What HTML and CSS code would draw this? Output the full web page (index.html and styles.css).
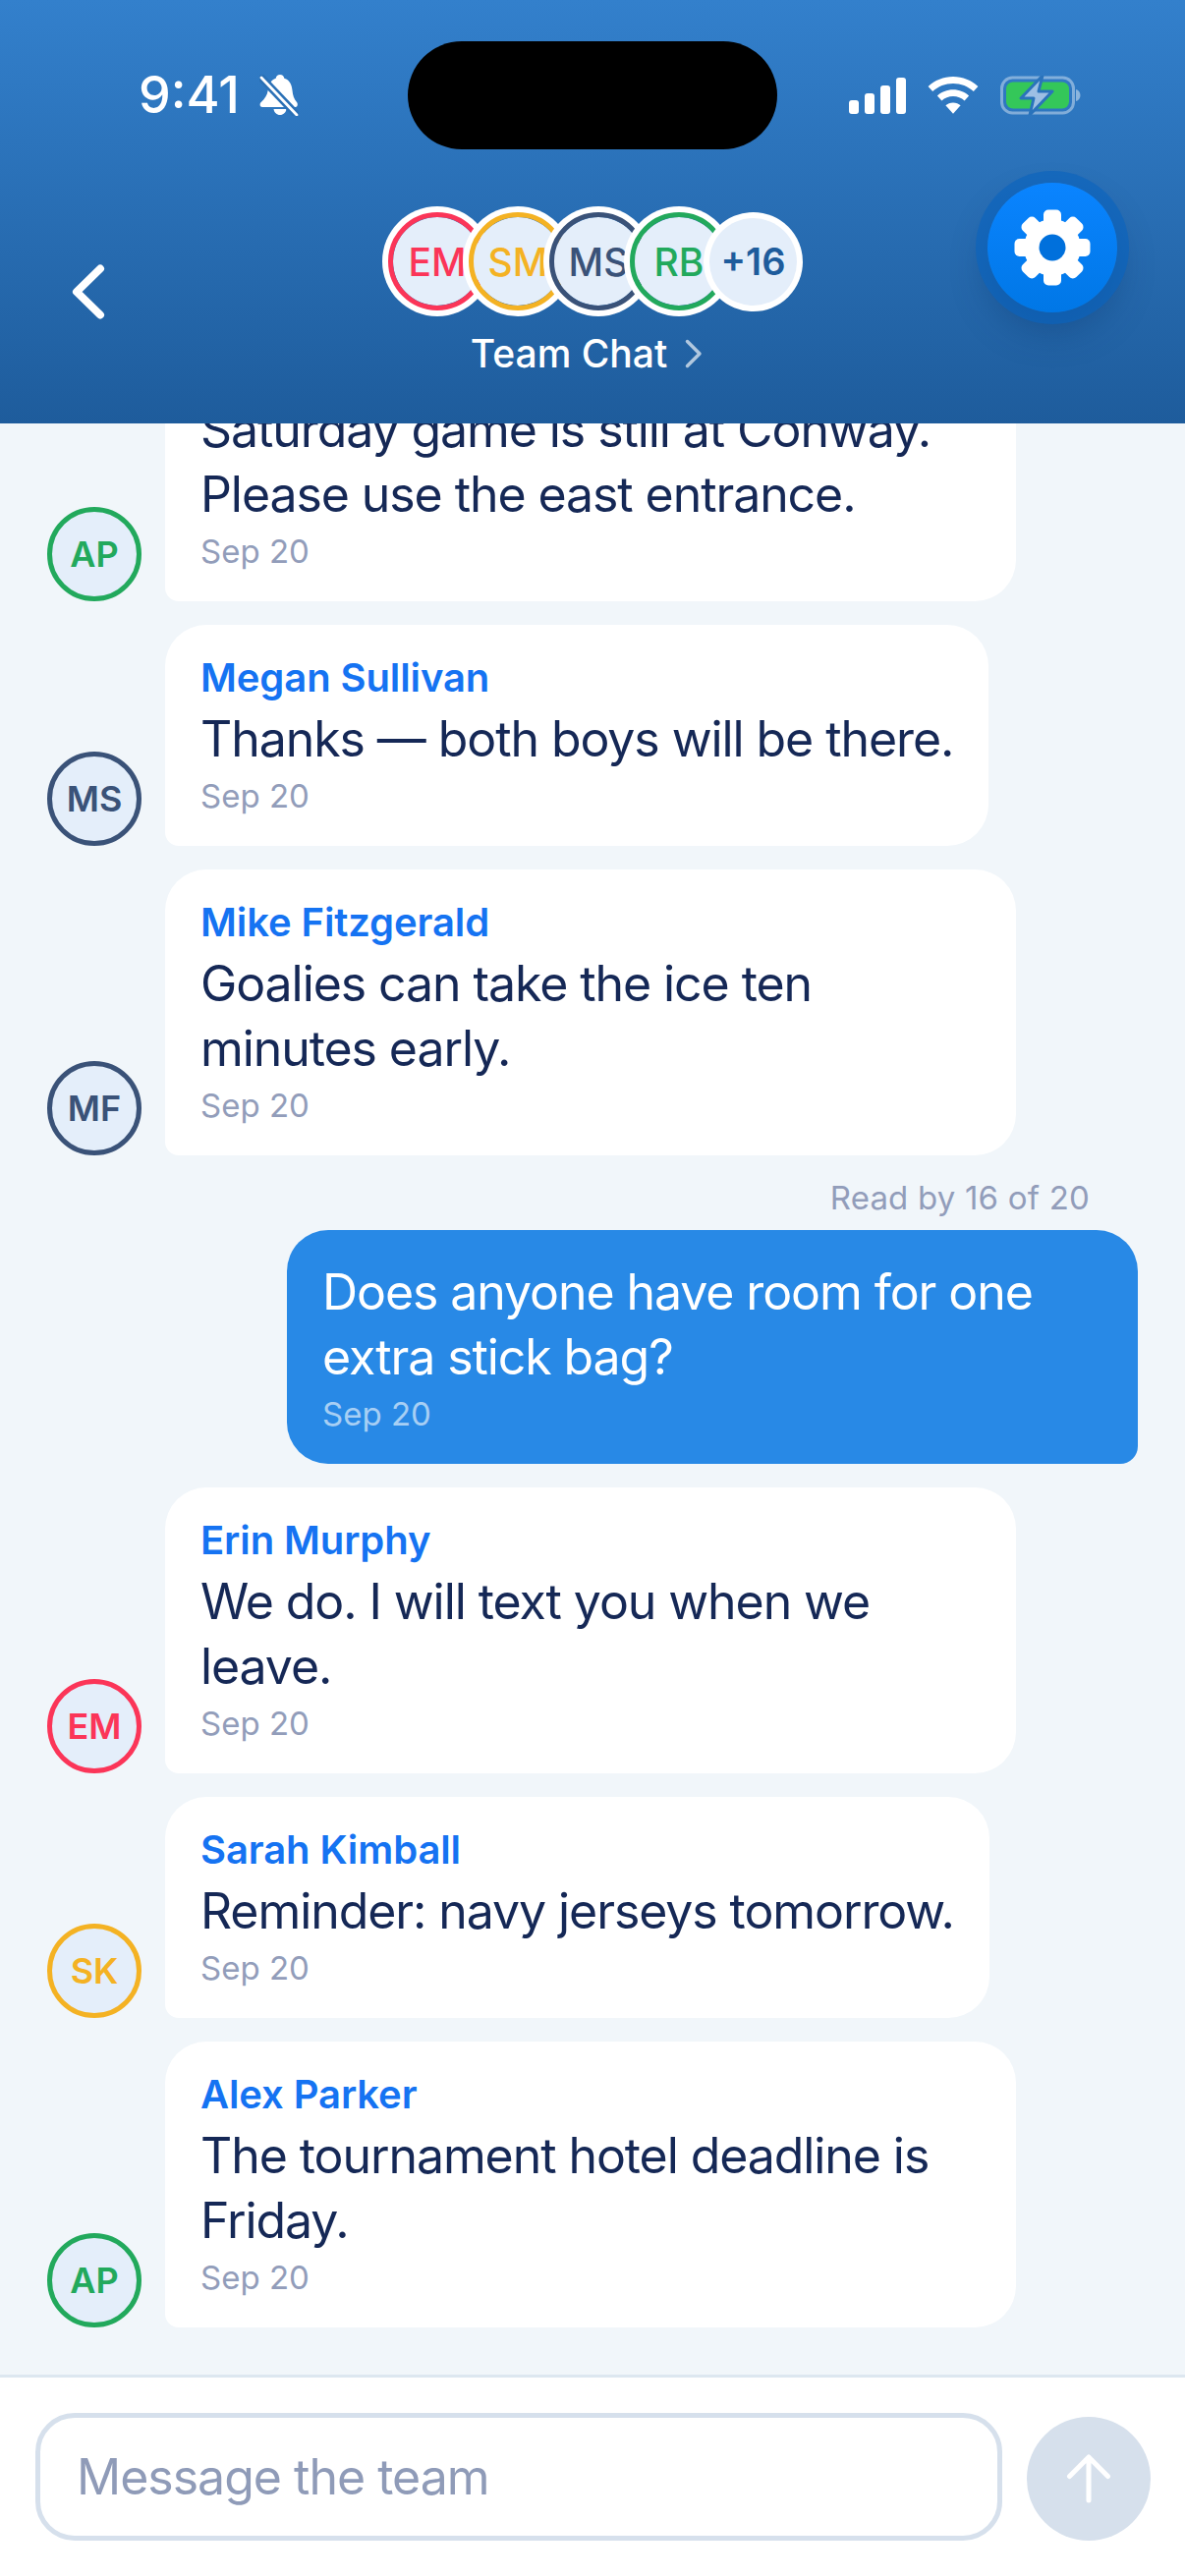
FILE: index.html
```html
<!DOCTYPE html>
<html lang="en">
<head>
    <meta charset="UTF-8">
    <meta name="viewport" content="width=device-width, initial-scale=1.0">
    <title>Team Chat</title>
    <link rel="stylesheet" href="styles.css">
</head>
<body>
    <div class="screen">
        <header class="header">
            <div class="island"></div>
            <div class="status-bar">
                <div class="status-left">
                    <span class="time">9:41</span>
                    <svg class="bell" width="40" height="42" viewBox="0 0 40 42">
                        <path d="M21 0c2.500 0 4 1.600 4.300 3.700C31 5.300 33 10.500 33.500 16c.4 5 1.800 9 4.500 12 1.200 1.400 1.300 5-1.500 5H3c-2.800 0-2.800-3.300-1.500-4.700C5.500 24.500 8 21 8.700 16c.7-6 3-10.700 8-12.300C17 1.600 18.500 0 21 0zM14.500 35h13c-.5 3.500-3.200 6-6.500 6s-6-2.500-6.500-6z" fill="#fff"/>
                        <path d="M0 1L40 43" stroke="#2a70b6" stroke-width="8"/>
                        <path d="M2 3L38 41" stroke="#fff" stroke-width="2.800" stroke-linecap="round"/>
                    </svg>
                </div>
                <div class="status-right">
                    <div class="signal">
                        <span class="bar bar-1"></span>
                        <span class="bar bar-2"></span>
                        <span class="bar bar-3"></span>
                        <span class="bar bar-4"></span>
                    </div>
                    <svg width="52" height="38" viewBox="0 0 52 38">
                        <path d="M26 0c9.800 0 18.700 3.800 25.400 10l-4.600 5C41.300 9.800 34 6.900 26 6.900S10.700 9.800 5.200 15L.6 10C7.300 3.800 16.200 0 26 0z" fill="#fff"/>
                        <path d="M26 13.200c6.200 0 11.800 2.300 16.100 6.200l-4.500 5C34.500 21.600 30.400 20 26 20s-8.500 1.600-11.600 4.400l-4.500-5c4.300-3.900 9.900-6.200 16.100-6.200z" fill="#fff"/>
                        <path d="M26 26.400c3 0 5.600 1.100 7.600 2.900L26 37.800l-7.600-8.500c2-1.800 4.600-2.900 7.600-2.900z" fill="#fff"/>
                    </svg>
                    <svg width="82" height="40" viewBox="0 0 82 40">
                        <rect x="1.500" y="2" width="73" height="36" rx="11" fill="none" stroke="#fff" stroke-opacity=".4" stroke-width="3"/>
                        <rect x="6" y="6.500" width="64" height="27" rx="7" fill="#34c759"/>
                        <path d="M77 14c2.800.8 4.500 3 4.500 6s-1.700 5.200-4.500 6z" fill="#fff" fill-opacity=".45"/>
                        <path d="M43 0L21 23h13l-4 17 23-24H39z" fill="#9dbfe4" stroke="#2a73bb" stroke-width="3" stroke-linejoin="round"/>
                    </svg>
                </div>
            </div>

            <div class="nav">
                <svg class="back" width="34" height="56" viewBox="0 0 34 56">
                    <path d="M29 4.500L5 28l24 23.500" fill="none" stroke="#fff" stroke-width="8" stroke-linecap="round" stroke-linejoin="round"/>
                </svg>
                <div class="nav-center">
                    <div class="stack">
                        <div class="stack-item ring-red">EM</div>
                        <div class="stack-item ring-yellow">SM</div>
                        <div class="stack-item ring-navy">MS</div>
                        <div class="stack-item ring-green">RB</div>
                        <div class="stack-item stack-more">+16</div>
                    </div>
                    <div class="nav-title">
                        <span>Team Chat</span>
                        <svg width="18" height="30" viewBox="0 0 18 30">
                            <path d="M2.500 2.500L15 15 2.500 27.500" fill="none" stroke="#fff" stroke-opacity=".65" stroke-width="3.500" stroke-linecap="round" stroke-linejoin="round"/>
                        </svg>
                    </div>
                </div>
            </div>

            <button class="settings">
                <svg width="78" height="78" viewBox="0 0 78 78">
                    <g fill="#fff">
                        <circle cx="39" cy="39" r="29"/>
                        <rect x="30" y="0.500" width="18" height="77" rx="5"/>
                        <rect x="30" y="0.500" width="18" height="77" rx="5" transform="rotate(45 39 39)"/>
                        <rect x="30" y="0.500" width="18" height="77" rx="5" transform="rotate(90 39 39)"/>
                        <rect x="30" y="0.500" width="18" height="77" rx="5" transform="rotate(135 39 39)"/>
                    </g>
                    <circle cx="39" cy="39" r="13.500" fill="#0070dc"/>
                </svg>
            </button>
        </header>

        <main class="messages">
            <div class="row">
                <div class="avatar ring-green">AP</div>
                <div class="bubble">
                    <div class="sender">Alex Parker</div>
                    <div class="body">Saturday game is still at Conway. Please use the east entrance.</div>
                    <div class="date">Sep 20</div>
                </div>
            </div>
            <div class="row">
                <div class="avatar ring-navy">MS</div>
                <div class="bubble">
                    <div class="sender">Megan Sullivan</div>
                    <div class="body">Thanks — both boys will be there.</div>
                    <div class="date">Sep 20</div>
                </div>
            </div>
            <div class="row">
                <div class="avatar ring-navy">MF</div>
                <div class="bubble">
                    <div class="sender">Mike Fitzgerald</div>
                    <div class="body">Goalies can take the ice ten minutes early.</div>
                    <div class="date">Sep 20</div>
                </div>
            </div>
            <div class="outgoing">
                <div class="read-by">Read by 16 of 20</div>
                <div class="bubble bubble-own">
                    <div class="body">Does anyone have room for one extra stick bag?</div>
                    <div class="date">Sep 20</div>
                </div>
            </div>
            <div class="row">
                <div class="avatar ring-red">EM</div>
                <div class="bubble">
                    <div class="sender">Erin Murphy</div>
                    <div class="body">We do. I will text you when we leave.</div>
                    <div class="date">Sep 20</div>
                </div>
            </div>
            <div class="row">
                <div class="avatar ring-yellow">SK</div>
                <div class="bubble">
                    <div class="sender">Sarah Kimball</div>
                    <div class="body">Reminder: navy jerseys tomorrow.</div>
                    <div class="date">Sep 20</div>
                </div>
            </div>
            <div class="row">
                <div class="avatar ring-green">AP</div>
                <div class="bubble">
                    <div class="sender">Alex Parker</div>
                    <div class="body">The tournament hotel deadline is Friday.</div>
                    <div class="date">Sep 20</div>
                </div>
            </div>
        </main>

        <footer class="composer">
            <div class="composer-input">Message the team</div>
            <button class="send">
                <svg width="48" height="50" viewBox="0 0 48 50">
                    <path d="M24 47V3M4.500 22.500L24 3l19.500 19.500" fill="none" stroke="#fff" stroke-width="5" stroke-linecap="round" stroke-linejoin="round"/>
                </svg>
            </button>
        </footer>
    </div>
</body>
</html>
```

FILE: styles.css
```css
* {
    margin: 0;
    padding: 0;
    box-sizing: border-box;
}

body {
    width: 1206px;
    height: 2622px;
    overflow: hidden;
    background: #f1f6fa;
    font-family: Inter, 'Noto Sans', sans-serif;
}

.screen {
    height: 100%;
    display: flex;
    flex-direction: column;
}

/* header */

.header {
    position: relative;
    flex: none;
    height: 431px;
    background: linear-gradient(180deg, #3380cc 0%, #1e5c9c 100%);
    color: white;
    z-index: 2;
}

.island {
    position: absolute;
    left: 415px;
    top: 42px;
    width: 376px;
    height: 110px;
    border-radius: 55px;
    background: black;
}

.status-bar {
    display: flex;
    justify-content: space-between;
    align-items: center;
    height: 42px;
    padding: 76px 106px 0 141px;
    box-sizing: content-box;
}

.status-left {
    display: flex;
    align-items: center;
    gap: 20px;
}

.time {
    font-size: 52px;
    font-weight: 500;
    line-height: 42px;
}

.status-right {
    display: flex;
    align-items: center;
    gap: 22px;
}

.signal {
    display: flex;
    align-items: flex-end;
    gap: 6px;
    height: 37px;
}

.bar {
    width: 10px;
    border-radius: 3px;
    background: white;
}

.bar-1 { height: 14px; }
.bar-2 { height: 21px; }
.bar-3 { height: 29px; }
.bar-4 { height: 37px; }

.nav {
    position: relative;
    display: flex;
    justify-content: center;
    padding-top: 98px;
}

.back {
    position: absolute;
    left: 73px;
    top: 151px;
}

.nav-center {
    display: flex;
    flex-direction: column;
    align-items: center;
    gap: 21px;
}

.stack {
    display: flex;
    align-items: center;
}

.stack-item {
    width: 100px;
    height: 100px;
    border-radius: 50%;
    background: #e4eefa;
    box-shadow: 0 0 0 6px white;
    border: 5px solid;
    display: flex;
    justify-content: center;
    align-items: center;
    font-size: 39px;
    font-weight: 500;
    flex: none;
    margin-left: -18px;
    position: relative;
    background-clip: padding-box;
}

.stack-item:first-child {
    margin-left: 0;
}

.stack-more {
    width: 89px;
    height: 89px;
    margin-left: -19px;
    border: none;
    color: #1e5c9c;
    font-size: 38px;
    font-weight: 600;
}

.nav-title {
    display: flex;
    align-items: center;
    gap: 18px;
    margin-right: 12px;
    font-size: 39px;
    font-weight: 500;
    line-height: 46px;
}

.ring-red { border-color: #fb3558; color: #fb3558; }
.ring-yellow { border-color: #f4b223; color: #f4b223; }
.ring-navy { border-color: #3a5278; color: #3a5278; }
.ring-green { border-color: #22a95c; color: #22a95c; }

.settings {
    position: absolute;
    left: 1005px;
    top: 186px;
    width: 132px;
    height: 132px;
    border: none;
    border-radius: 50%;
    background: linear-gradient(180deg, #0a84ff 0%, #0077e6 100%);
    box-shadow: 0 0 0 12px rgba(10, 100, 190, 0.65), 0 18px 36px rgba(10, 50, 100, 0.35);
    display: flex;
    justify-content: center;
    align-items: center;
}

/* messages */

.messages {
    flex: 1;
    min-height: 0;
    overflow: hidden;
    display: flex;
    flex-direction: column;
    justify-content: flex-end;
    gap: 24px;
    padding: 0 48px 48px;
}

.row {
    flex: none;
    display: flex;
    align-items: flex-end;
    gap: 24px;
}

.avatar {
    flex: none;
    width: 96px;
    height: 96px;
    border-radius: 50%;
    border: 5px solid;
    background: #e4eefa;
    display: flex;
    justify-content: center;
    align-items: center;
    font-size: 36px;
    font-weight: 600;
}

.bubble {
    max-width: 866px;
    padding: 29px 36px 30px;
    background: white;
    border-radius: 42px 42px 42px 14px;
}

.sender {
    font-size: 40px;
    font-weight: 600;
    letter-spacing: -0.1px;
    line-height: 50px;
    margin-bottom: 4px;
    color: #1573f2;
}

.body {
    font-size: 50px;
    letter-spacing: -1.08px;
    line-height: 66px;
    color: #152856;
}

.date {
    font-size: 33px;
    line-height: 41px;
    margin-top: 5px;
    color: #929dba;
}

.outgoing {
    flex: none;
    display: flex;
    flex-direction: column;
    align-items: flex-end;
    gap: 12px;
}

.read-by {
    margin-right: 49px;
    margin-top: -2px;
    font-size: 33px;
    letter-spacing: 0.2px;
    line-height: 42px;
    color: #929dba;
}

.bubble-own {
    width: 866px;
    padding: 30px 36px;
    background: #2889e6;
    border-radius: 42px 42px 18px 42px;
}

.bubble-own .body {
    color: white;
}

.bubble-own .date {
    color: rgba(255, 255, 255, 0.6);
}

/* composer */

.composer {
    flex: none;
    height: 205px;
    display: flex;
    gap: 25px;
    padding: 36px 35px 0 36px;
    background: white;
    border-top: 3px solid #dde7f0;
}

.composer-input {
    flex: 1;
    height: 130px;
    display: flex;
    align-items: center;
    padding-left: 37px;
    border: 5px solid #d6e0ec;
    border-radius: 40px;
    font-size: 50px;
    letter-spacing: -1px;
    color: #8f9bb8;
}

.send {
    flex: none;
    width: 126px;
    height: 126px;
    margin-top: 4px;
    border: none;
    border-radius: 50%;
    background: #d6e0ec;
    display: flex;
    justify-content: center;
    align-items: center;
}
```
